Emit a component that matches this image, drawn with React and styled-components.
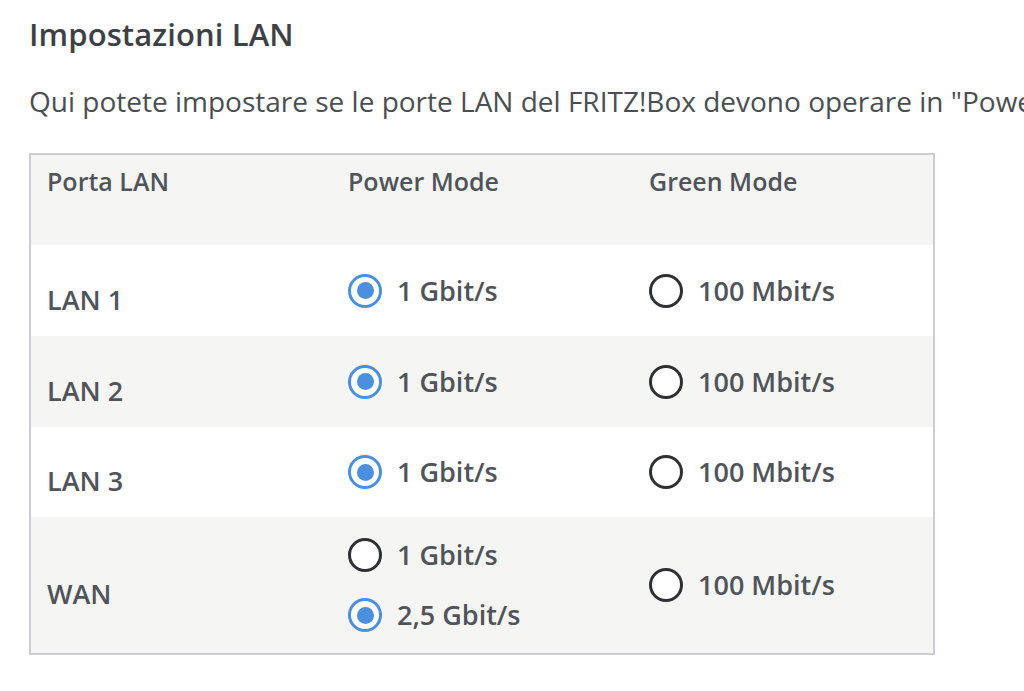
import React from "react";
import styled, { createGlobalStyle } from "styled-components";

const Global = createGlobalStyle`
  html, body { margin: 0; padding: 0; background: #fff; }
  body { font-family: "Open Sans", "Noto Sans", sans-serif; color: #4b4f55; overflow: hidden; }
`;

const Page = styled.div`
  padding: 13px 0 0 29px;
  width: 995px;
  overflow: hidden;
`;

const Title = styled.h2`
  margin: 0;
  font-size: 31px;
  font-weight: 600;
  color: #3d4146;
  line-height: 42px;
  letter-spacing: 0.1px;
`;

const Intro = styled.p`
  margin: 27px 0 0 0;
  font-size: 28px;
  font-weight: 400;
  line-height: 38px;
  white-space: nowrap;
  color: #4a4e53;
`;

const Table = styled.div`
  margin-top: 33px;
  width: 902px;
  border: 2px solid #c9ced4;
  display: grid;
  grid-template-columns: 301px 301px 300px;
`;

const Row = styled.div`
  display: contents;
`;

const Cell = styled.div`
  background: ${(p) => (p.$alt ? "#f5f5f4" : "#fff")};
  height: ${(p) => p.$h}px;
  box-sizing: border-box;
  padding-left: 16px;
  display: flex;
  flex-direction: column;
  justify-content: ${(p) => (p.$top ? "flex-start" : "center")};
  padding-top: ${(p) => (p.$top ? 9 : p.$shift || 0)}px;
  gap: 20px;
`;

const HeadText = styled.span`
  font-size: 25px;
  font-weight: 600;
  color: #50545a;
  line-height: 34px;
`;

const PortLabel = styled.span`
  font-size: 27px;
  font-weight: 600;
  color: #50545a;
  line-height: 34px;
`;

const Option = styled.label`
  display: flex;
  align-items: center;
  gap: 15px;
  font-size: 27px;
  font-weight: 600;
  color: #50545a;
  line-height: 40px;
`;

const Radio = styled.span`
  width: 34px;
  height: 34px;
  box-sizing: border-box;
  border-radius: 50%;
  border: 3px solid ${(p) => (p.$on ? "#4a8fe0" : "#2e3033")};
  background: #fff;
  display: flex;
  align-items: center;
  justify-content: center;
  flex: none;
  &::after {
    content: "";
    width: 17px;
    height: 17px;
    border-radius: 50%;
    background: ${(p) => (p.$on ? "#4a8fe0" : "transparent")};
  }
`;

const rows = [
  { port: "LAN 1", power: [["1 Gbit/s", true]], h: 91, alt: false },
  { port: "LAN 2", power: [["1 Gbit/s", true]], h: 91, alt: true },
  { port: "LAN 3", power: [["1 Gbit/s", true]], h: 90, alt: false },
  { port: "WAN", power: [["1 Gbit/s", false], ["2,5 Gbit/s", true]], h: 136, alt: true },
];

export default function App() {
  return (
    <>
      <Global />
      <Page>
        <Title>Impostazioni LAN</Title>
        <Intro>Qui potete impostare se le porte LAN del FRITZ!Box devono operare in "Power Mode" o in "Green Mode".</Intro>
        <Table>
          <Row>
            <Cell $alt $h={90} $top><HeadText>Porta LAN</HeadText></Cell>
            <Cell $alt $h={90} $top><HeadText>Power Mode</HeadText></Cell>
            <Cell $alt $h={90} $top><HeadText>Green Mode</HeadText></Cell>
          </Row>
          {rows.map((r) => (
            <Row key={r.port}>
              <Cell $alt={r.alt} $h={r.h} $shift={18}><PortLabel>{r.port}</PortLabel></Cell>
              <Cell $alt={r.alt} $h={r.h}>
                {r.power.map(([t, on]) => (
                  <Option key={t}><Radio $on={on} />{t}</Option>
                ))}
              </Cell>
              <Cell $alt={r.alt} $h={r.h}>
                <Option><Radio />100 Mbit/s</Option>
              </Cell>
            </Row>
          ))}
        </Table>
      </Page>
    </>
  );
}
